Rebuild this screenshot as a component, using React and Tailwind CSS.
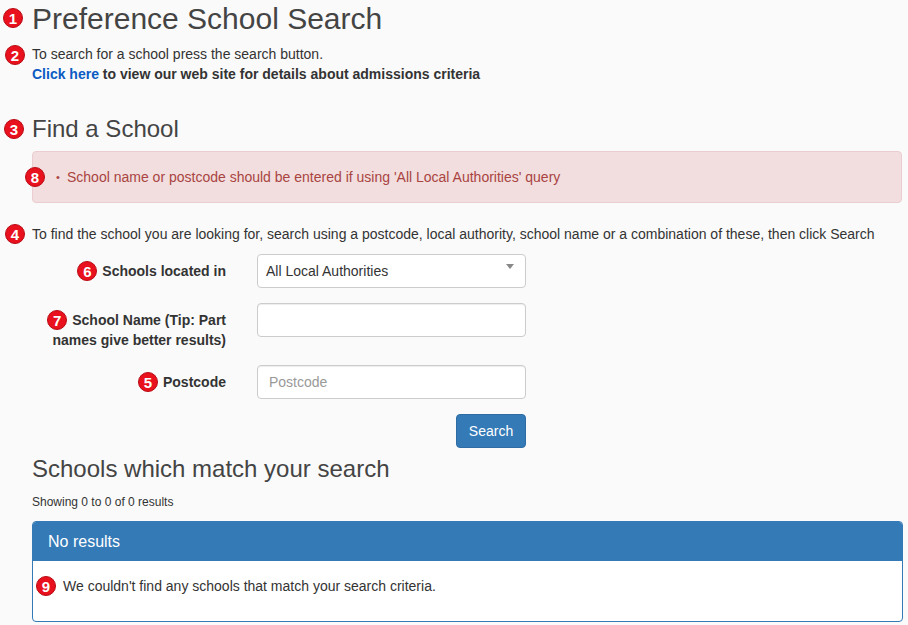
import React from "react";

function Badge({ n, className = "" }) {
  return (
    <span
      className={
        "inline-flex items-center justify-center w-[20px] h-[20px] rounded-full bg-[#e8111d] text-white font-bold text-[15px] leading-none border border-[#b80b14] " +
        className
      }
      style={{ fontFamily: '"Liberation Sans", Arial, sans-serif' }}
    >
      {n}
    </span>
  );
}

export default function App() {
  return (
    <div
      className="min-h-screen bg-[#fafafa] text-[#333] pl-[32px] pr-[6px] pt-[2px] pb-[3px]"
      style={{ fontFamily: '"Liberation Sans", Arial, Helvetica, sans-serif' }}
    >
      <h1 className="relative text-[30px] leading-[33px] text-[#444]">
        <Badge n="1" className="absolute -left-[29px] top-[6px]" />
        Preference School Search
      </h1>

      <div className="relative mt-[9px] text-[14px] leading-[20px]">
        <Badge n="2" className="absolute -left-[27px] top-[1px]" />
        <p>To search for a school press the search button.</p>
        <p className="font-bold">
          <span className="text-[#0b5bc4]">Click here</span> to view our web site for details about admissions criteria
        </p>
      </div>

      <h2 className="relative mt-[32px] text-[24px] leading-[26px] text-[#444]">
        <Badge n="3" className="absolute -left-[28px] top-[3px]" />
        Find a School
      </h2>

      <div className="relative mt-[9px] rounded-[4px] border border-[#ebccd1] bg-[#f2dede] text-[#a94442] px-[15px] py-[15px] text-[14px] leading-[20px]">
        <Badge n="8" className="absolute -left-[8px] top-[15px]" />
        <ul className="pl-[19px]">
          <li className="relative">
            <span className="absolute -left-[11px] top-0 text-[11px]">•</span>
            School name or postcode should be entered if using 'All Local Authorities' query
          </li>
        </ul>
      </div>

      <p className="relative mt-[21px] text-[14px] leading-[20px]">
        <Badge n="4" className="absolute -left-[27px] top-[0px]" />
        To find the school you are looking for, search using a postcode, local authority, school name or a combination of these, then click Search
      </p>

      <div className="mt-[10px] flex flex-col gap-[15px] text-[14px] leading-[20px]">
        <div className="flex">
          <label className="w-[194px] pt-[7px] text-right font-bold">
            <Badge n="6" className="align-top mr-[5px]" />
            Schools located in
          </label>
          <div className="ml-[31px] w-[269px] h-[34px] relative bg-white border border-[#ccc] rounded-[4px] flex items-center pl-[8px]">
            <span>All Local Authorities</span>
            <span className="absolute right-[11px] top-[9px] w-0 h-0 border-l-[4px] border-r-[4px] border-t-[5px] border-l-transparent border-r-transparent border-t-[#888]" />
          </div>
        </div>

        <div className="flex">
          <label className="w-[194px] pt-[7px] text-right font-bold">
            <Badge n="7" className="align-top mr-[5px]" />
            School Name (Tip: Part names give better results)
          </label>
          <div className="ml-[31px] w-[269px] h-[34px] bg-white border border-[#ccc] rounded-[4px] shadow-[inset_0_1px_1px_rgba(0,0,0,0.075)]" />
        </div>

        <div className="flex">
          <label className="w-[194px] pt-[7px] text-right font-bold">
            <Badge n="5" className="align-top mr-[5px]" />
            Postcode
          </label>
          <div className="ml-[31px] w-[269px] h-[34px] bg-white border border-[#ccc] rounded-[4px] flex items-center pl-[11px] text-[#999] shadow-[inset_0_1px_1px_rgba(0,0,0,0.075)]">
            Postcode
          </div>
        </div>

        <div className="flex">
          <div className="w-[194px]" />
          <div className="ml-[31px] w-[269px] flex justify-end">
            <button className="h-[34px] w-[70px] bg-[#337ab7] border border-[#2e6da4] rounded-[4px] text-white text-[14px]">
              Search
            </button>
          </div>
        </div>
      </div>

      <h2 className="mt-[8px] text-[24px] leading-[26px] text-[#444]">Schools which match your search</h2>

      <p className="mt-[12px] text-[12px] leading-[17px]">Showing 0 to 0 of 0 results</p>

      <div className="relative mt-[10px] border border-[#337ab7] rounded-[4px] bg-white mr-[-1px]">
        <div className="bg-[#337ab7] text-white px-[15px] py-[10px] text-[16px] leading-[18px] rounded-t-[3px] h-[39px] flex items-center">
          No results
        </div>
        <div className="relative pl-[30px] pr-[15px] pt-[15px] pb-[15px] text-[14px] leading-[20px]">
          <Badge n="9" className="absolute left-[3px] top-[15px]" />
          <p className="mb-[10px]">We couldn't find any schools that match your search criteria.</p>
        </div>
      </div>
    </div>
  );
}
